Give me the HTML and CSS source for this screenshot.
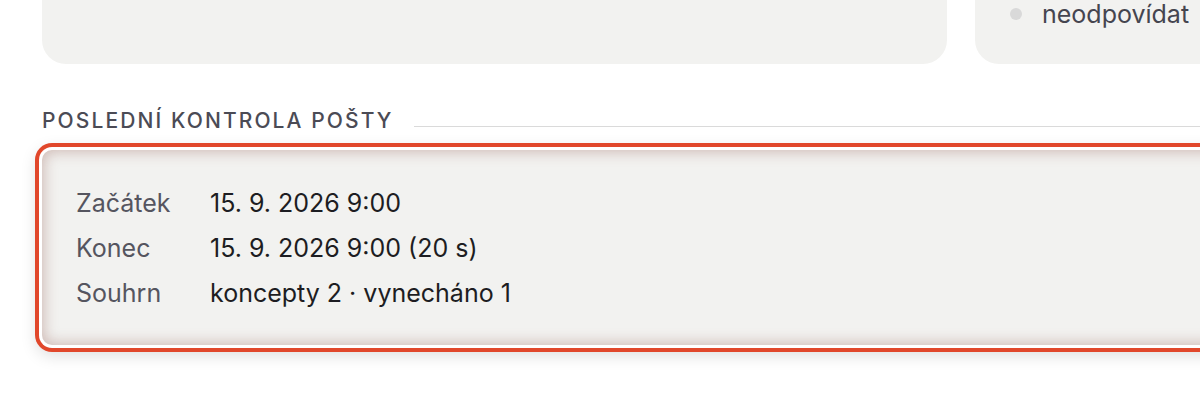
FILE: index.html
```html
<!DOCTYPE html>
<html lang="cs">
<head>
<meta charset="utf-8">
<title>Poslední kontrola pošty</title>
<link rel="stylesheet" href="styles.css">
</head>
<body>
<div class="page">
  <div class="top-row">
    <div class="panel panel-main"></div>
    <div class="panel panel-side">
      <ul class="legend">
        <li class="legend-item"><span class="dot"></span><span>neodpovídat</span></li>
      </ul>
    </div>
  </div>

  <div class="section-head">
    <h2 class="section-title">Poslední kontrola pošty</h2>
    <div class="section-rule"></div>
  </div>

  <div class="check-card">
    <dl class="check-list">
      <dt>Začátek</dt><dd>15. 9. 2026 9:00</dd>
      <dt>Konec</dt><dd>15. 9. 2026 9:00 (20 s)</dd>
      <dt>Souhrn</dt><dd>koncepty 2 · vynecháno 1</dd>
    </dl>
  </div>
</div>
</body>
</html>
```

FILE: styles.css
```css
* { box-sizing: border-box; }

html {
  overflow: hidden;
  background: #ffffff;
}

body {
  margin: 0;
  padding: 0;
  min-height: 400px;
  font-family: Inter, "Noto Sans", "Liberation Sans", sans-serif;
  color: #1d1d22;
}

.page {
  width: 1400px;
  padding-left: 42px;
}

.top-row {
  display: flex;
  gap: 28px;
  margin-top: -100px;
}

.panel {
  background: #f2f2f0;
  border-radius: 24px;
  height: 164px;
}

.panel-main { width: 905px; }

.panel-side {
  width: 400px;
  display: flex;
  flex-direction: column;
  justify-content: flex-end;
  padding: 0 0 36px 35px;
}

.legend {
  list-style: none;
  margin: 0;
  padding: 0;
}

.legend-item {
  display: flex;
  align-items: center;
  gap: 20px;
  font-size: 25px;
  line-height: 28px;
  color: #45454f;
}

.dot {
  width: 12px;
  height: 12px;
  border-radius: 50%;
  background: #d9d9d9;
}

.section-head {
  display: flex;
  align-items: flex-end;
  gap: 20px;
  margin-top: 45px;
}

.section-title {
  margin: 0;
  font-size: 21px;
  line-height: 24px;
  font-weight: 500;
  letter-spacing: 2.1px;
  text-transform: uppercase;
  color: #4b4b55;
  white-space: nowrap;
}

.section-rule {
  flex: 1;
  height: 1px;
  background: #dadada;
  margin-bottom: 6px;
}

.check-card {
  margin-top: 17px;
  width: 1300px;
  height: 195px;
  background: #f2f2f0;
  border-radius: 10px;
  padding: 37px 34px 34px;
  box-shadow:
    inset 0 0 14px 2px rgba(150, 95, 85, 0.38),
    0 0 0 3px #ffffff,
    0 0 0 7px #e1472b,
    0 5px 16px 6px rgba(0, 0, 0, 0.13);
}

.check-list {
  margin: 0;
  display: grid;
  grid-template-columns: 134px 1fr;
  row-gap: 13px;
  font-size: 25px;
  line-height: 32px;
}

.check-list dt {
  color: #55555f;
}

.check-list dd {
  margin: 0;
  color: #1d1d22;
}
```
